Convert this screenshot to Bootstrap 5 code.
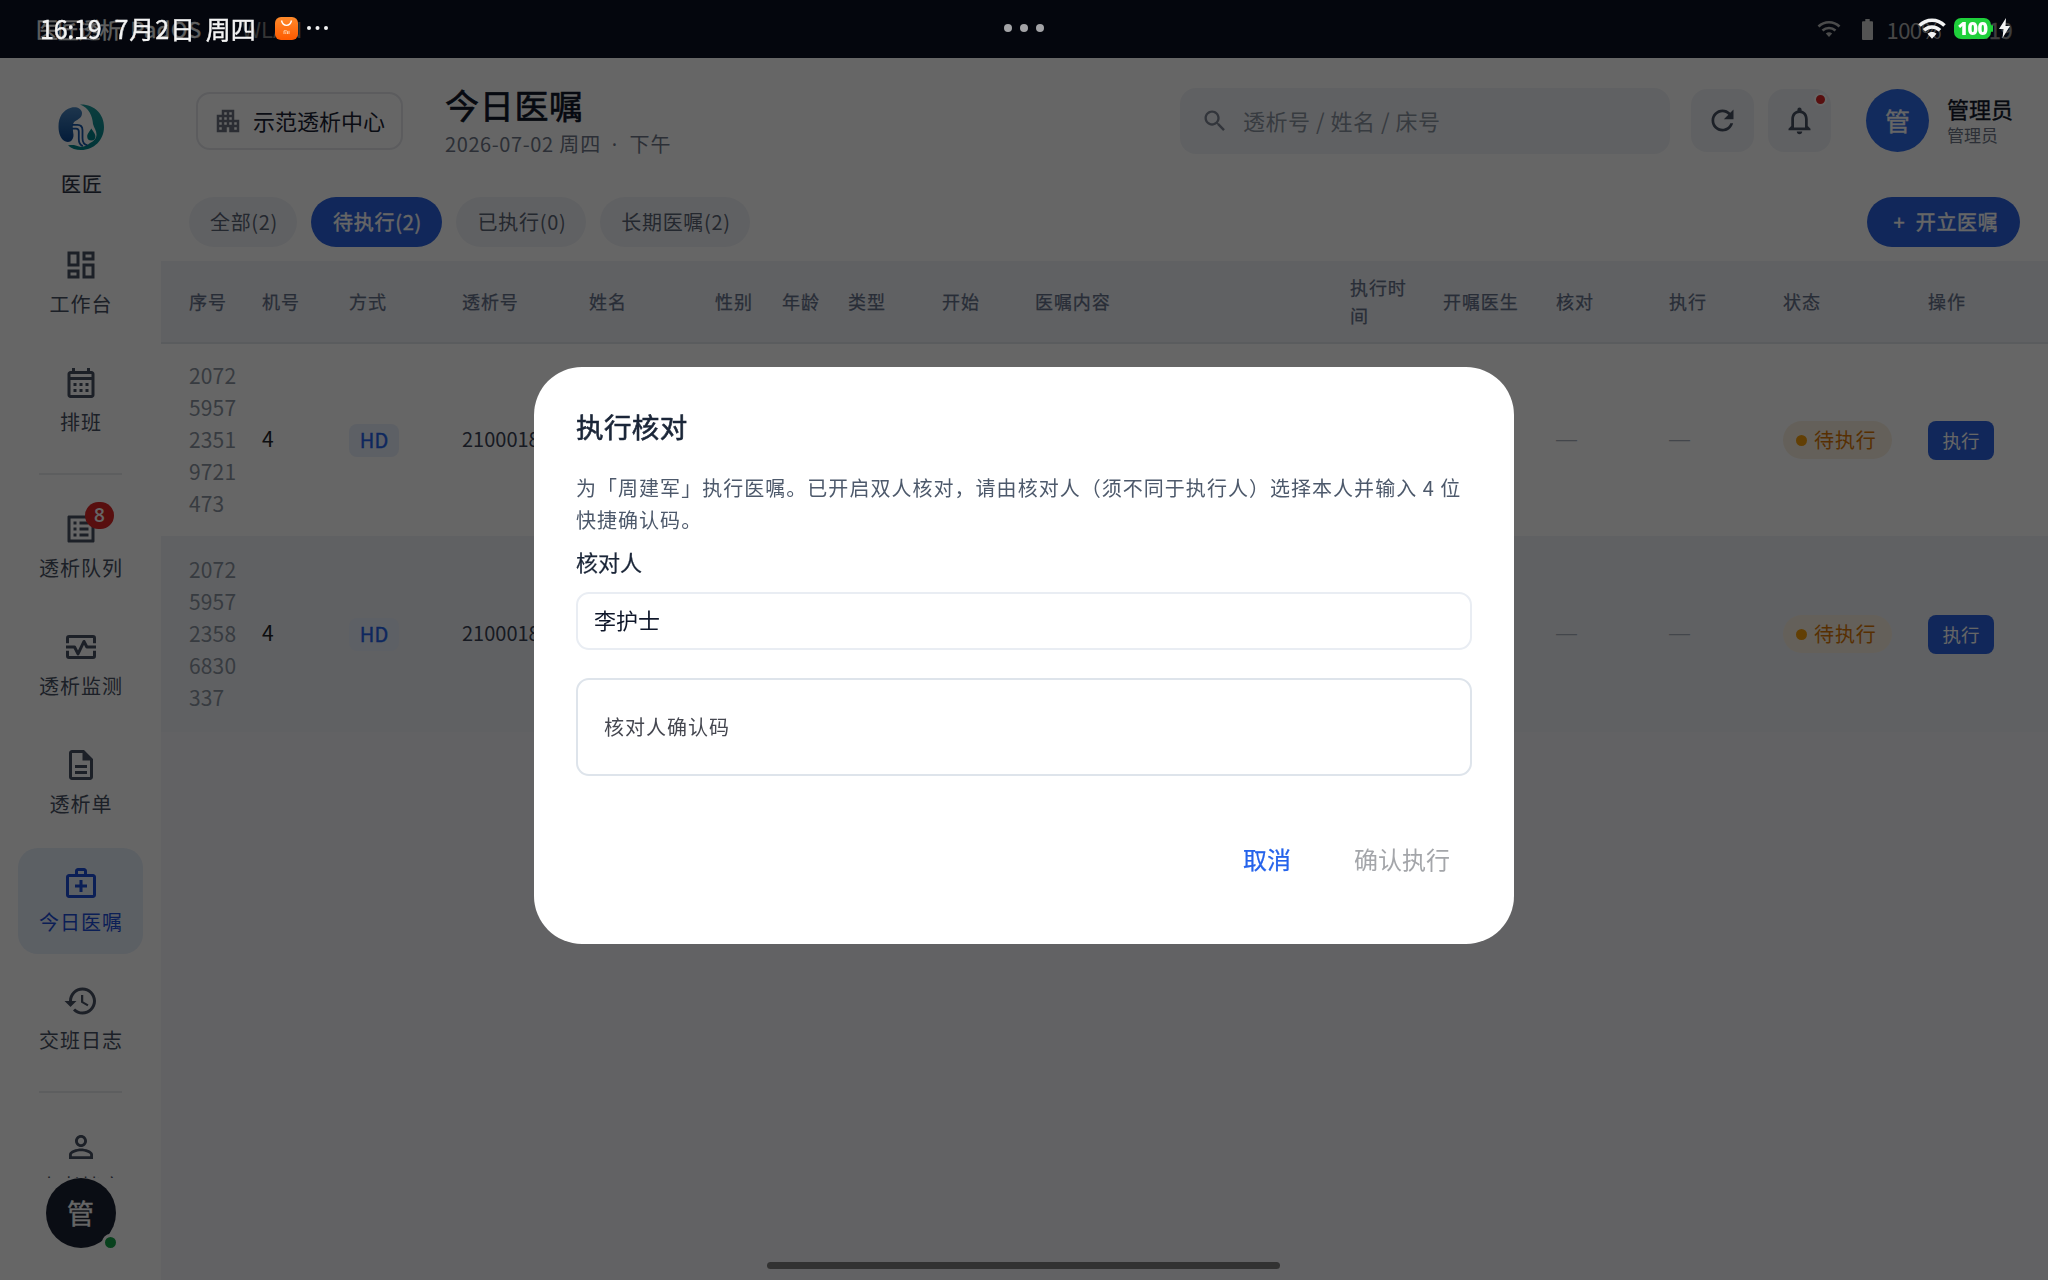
<!DOCTYPE html>
<html lang="zh-CN">
<head>
<meta charset="utf-8">
<meta name="viewport" content="width=device-width, initial-scale=1">
<title>今日医嘱</title>
<link href="https://cdn.jsdelivr.net/npm/bootstrap@5.3.0/dist/css/bootstrap.min.css" rel="stylesheet">
<style>
  body { font-family: "Noto Sans CJK SC", "Noto Sans", sans-serif; width: 2048px; height: 1280px; overflow: hidden; background: #fff; color: #0f172a; font-size: 20px; line-height: 1.3; }
  svg { display: block; flex: none; }
  .med { -webkit-text-stroke: .4px currentColor; }
  .trk { letter-spacing: 1px; }
  .appbar { height: 58px; background: #0a1122; color: #f1f1f1; font-size: 22px; padding: 0 36px; flex: none; }
  .appbar span { line-height: 56px; }
  .rail { width: 161px; flex: none; padding-top: 46px; color: #475063; }
  .rail-scroll { height: 949px; overflow: hidden; width: 125px; margin-top: 32px; padding-top: 1px; flex: none; }
  .rail-item { height: 106px; width: 125px; padding-top: 17px; border-radius: 20px; flex: none; letter-spacing: 1px; text-indent: 1px; line-height: 26px; position: relative; margin-bottom: 12px; }
  .rail-item svg { margin-bottom: 8px; }
  .rail-item.on { background: #e6effb; color: #1d4ed8; }
  .rail-item.last-in { margin-bottom: 0; }
  .rail-sep { width: 83px; height: 2px; background: #e9eaee; margin: 19px 0; flex: none; }
  .cnt { position: absolute; left: 67px; top: 8px; width: 29px; height: 27px; border-radius: 14px; background: #dc2626; color: #fff; font: 600 19px/27px "Open Sans", "Noto Sans", sans-serif; text-align: center; text-indent: 0; letter-spacing: 0; }
  .me { width: 70px; height: 70px; background: #1b2233; color: #fff; font-size: 27px; position: relative; flex: none; }
  .live { position: absolute; width: 17px; height: 17px; right: -3px; bottom: -3px; border: 3px solid #fff; background: #16a34a; border-radius: 50%; }
  .topline { height: 127px; padding: 0 28px 2px 35px; flex: none; }
  .org { width: 207px; height: 58px; border: 2px solid #e5e7ec; border-radius: 14px; padding-left: 15px; gap: 10px; font-size: 22px; color: #1a2233; }
  .find { width: 490px; height: 66px; border-radius: 16px; background: #f1f3f7; padding-left: 21px; gap: 14px; color: #8b93a1; font-size: 22px; letter-spacing: .5px; }
  .sq { width: 63px; height: 63px; border-radius: 16px; background: #f1f3f7; color: #475063; position: relative; }
  .reddot { position: absolute; right: 4px; top: 4px; width: 13px; height: 13px; border: 2.500px solid #fff; background: #dc2626; border-radius: 50%; }
  .face { width: 63px; height: 63px; background: #2f6be8; color: #fff; font-size: 25px; }
  .tabs-line { height: 76px; padding: 12px 28px 14px 28px; gap: 14px; flex: none; }
  .chip { height: 50px; border-radius: 25px; background: #f1f3f7; color: #5b6475; letter-spacing: .7px; line-height: 50px; text-align: center; padding: 0 0 0 2px; font-size: 20px; }
  .chip.on, .chip.add { background: #2b63e0; color: #fff; }
  .main { background: #f6f6f9; flex: 1; }
  .orders { table-layout: fixed; width: 1887px; margin: 0; --bs-table-bg: transparent; }
  .orders th, .orders td { border: 0; padding: 0 0 2px; vertical-align: middle; }
  .orders th:first-child, .orders td:first-child { padding: 0 18px 3px 28px; }
  .orders th { height: 82px; background: #f1f3f7; border-bottom: 2px solid #e2e6ec; color: #64708a; font-size: 18px; letter-spacing: .9px; line-height: 28px; font-weight: 400; -webkit-text-stroke: .25px currentColor; }
  .orders th, .orders th:first-child { padding-bottom: 2px; }
  .orders th.wrapped { padding-right: 22px; }
  .orders td { height: 196px; font-size: 21px; background: #fff; box-shadow: none; }
  .orders tr:nth-child(1) td { height: 193px; }
  .orders tr.alt td { background: #f1f3f7; }
  .orders td:nth-child(15), .orders td:nth-child(16), .orders td:nth-child(3) { padding-bottom: 0; }
  .serial { color: #8b93a1 !important; line-height: 32px; word-break: break-all; letter-spacing: .15px; }
  .mode { display: inline-block; width: 50px; height: 33px; line-height: 32px; border-radius: 8px; background: #e9f0fc; color: #2563eb; text-align: center; font-size: 20px; vertical-align: middle; }
  .pno { font-size: 20px !important; color: #3a4355 !important; }
  .orders .nil { color: #a9b0bb; font-family: "Liberation Sans", sans-serif; }
  .state { display: inline-flex; align-items: center; width: 109px; height: 38px; border-radius: 19px; background: #fbf1e1; color: #d97706; font-size: 20px; letter-spacing: .9px; padding-left: 13px; gap: 7px; vertical-align: middle; }
  .state i { width: 11px; height: 11px; border-radius: 50%; background: #f59e0b; }
  .go { width: 66px; height: 39px; line-height: 37px; padding: 0; border: 0; border-radius: 8px; background: #2b63e0; color: #fff; font-size: 18.500px; vertical-align: middle; }
  .scrim { opacity: .6 !important; width: 2048px; height: 1280px; }
  .sheet { max-width: 980px; width: 980px; margin: 367px 0 0 534px; }
  .sheet .modal-content { height: 577px; border: 0; border-radius: 48px; padding: 0 42px; }
  .sheet h5 { font-size: 27.500px; line-height: 40px; margin: 39px 0 0 0; color: #1b2638; font-weight: 400; -webkit-text-stroke: .6px currentColor; letter-spacing: .4px; }
  .sheet p { font-size: 20px; letter-spacing: 1.030px; line-height: 32px; margin: 26px 0 0 0; color: #4d596b; }
  .sheet label { font-size: 22px; line-height: 30px; margin: 10px 0 0 0; color: #1b2638; }
  .pick { height: 58px; border: 2px solid #e9edf3; border-radius: 13px; margin-top: 16px; padding-left: 16px; font-size: 22px; line-height: 51px; }
  .code { height: 98px; border: 2px solid #dee4eb; border-radius: 13px; margin-top: 28px; padding-left: 26px; letter-spacing: 1px; line-height: 94px; color: #454750; }
  .acts { margin-top: 59px; padding-right: 22px; gap: 63px; font-size: 24px; line-height: 48px; }
  .acts .no { color: #2563eb; -webkit-text-stroke-width: .25px; } .acts .yes { color: #a4a6aa; }
  .sys { position: fixed; top: 0; left: 0; width: 2048px; height: 56px; z-index: 2000; color: #f3f3f3; padding: 0 38px 0 40px; font-size: 25px; line-height: 52px; }
  .mi { width: 23px; height: 23px; }
  .sysdots { position: absolute; left: 1004px; top: 24px; gap: 8px; }
  .sysdots i { width: 8px; height: 8px; border-radius: 50%; background: #a3a3a6; }
  .pill100 { width: 37px; height: 21px; border-radius: 7px; background: #1fd03b; color: #fff; font: 800 18px/21px "Open Sans", sans-serif; text-align: center; letter-spacing: -.6px; }
  .homebar { position: fixed; left: 767px; top: 1262px; width: 513px; height: 7px; border-radius: 4px; background: #323232; z-index: 2000; }
</style>
</head>
<body>
<div class="d-flex flex-column h-100">
  <header class="appbar d-flex justify-content-between">
    <div class="d-flex"><span class="med" style="letter-spacing:-.9px">医匠透析</span><span class="med" style="margin-left:10px;letter-spacing:.6px">PadOS</span><span style="margin-left:40px;color:#858585">WLAN</span></div>
    <div class="d-flex align-items-center">
      <svg width="24" height="18" viewBox="0 0 24 18" fill="none" stroke="#bcbcbc" stroke-width="2.6" style="margin-right:21px"><path d="M1.500 6.500C7.500 .8 16.500 .8 22.500 6.500"/><path d="M5.500 10.500c3.800-3.400 9.200-3.400 13 0"/><path d="M8.800 13.400L12 17l3.200-3.600c-2-1.500-4.400-1.500-6.400 0z" fill="#bcbcbc" stroke="none"/></svg>
      <svg width="11" height="21" viewBox="0 0 11 21" fill="#d0d0d0" style="margin-right:14px"><path d="M3.300 0h4.400v2.300H10q1 0 1 1V20q0 1-1 1H1q-1 0-1-1V3.300q0-1 1-1h2.300z"/></svg>
      <span style="color:#b0b0b0;letter-spacing:-.6px;margin-right:19px">100%</span><span class="med" style="color:#9c9c9c;letter-spacing:-.6px">16:19</span>
    </div>
  </header>

  <div class="d-flex flex-grow-1">
    <nav class="rail d-flex flex-column align-items-center">
      <svg width="46" height="46" viewBox="0 0 46 46">
        <defs><linearGradient id="kid" x1="0" y1="0" x2="0" y2="1"><stop offset="0" stop-color="#4a86c0"/><stop offset="1" stop-color="#0a4690"/></linearGradient>
        <linearGradient id="rim" x1="0" y1="0" x2="0" y2="1"><stop offset="0" stop-color="#1f9a9c"/><stop offset="1" stop-color="#00838a"/></linearGradient></defs>
        <path d="M22 .6C36 0 46 10 46 23S36 46 23 46c-5 0-9.500-1.600-13-4.600 4-.8 8-.4 11 1.200 4 1 8-1 11-3.600 4-2 6.500-4.500 6.500-8.500 0-4-2.500-6.500-3.500-10.500C34.500 12 31 4 22 .6z" fill="url(#rim)"/>
        <path d="M13 3.800c5-1.500 10.500.5 11 5 .3 4.500-3.500 6.500-7 8.500-3.500 2.500-2 8-1.500 13.500 0 6-4 8.500-8.500 6.500C2.500 35 .5 29 .5 22.500.5 13 5 6 13 3.800z" fill="url(#kid)"/>
        <path d="M14 20.800h5.500q5 0 5 5.500v8q0 6 5 7" fill="none" stroke="#1656a8" stroke-width="1.800"/>
        <path d="M14 24.600h4q2.800 0 2.800 3v7.500q0 5.500 4 7" fill="none" stroke="#1656a8" stroke-width="1.800"/>
        <path d="M33.300 24.500c2.600 4 4.100 5.500 4.100 8a4.100 4.100 0 0 1-8.200 0c0-2.500 1.600-4 4.100-8z" fill="#00838a"/>
      </svg>
      <div class="trk med" style="margin-top:21px;line-height:26px;text-indent:3px;color:#2c3444;-webkit-text-stroke-width:.2px">医匠</div>
      <div class="rail-scroll d-flex flex-column align-items-center">
        <div class="rail-item d-flex flex-column align-items-center">
          <svg width="36" height="36" viewBox="0 0 24 24" fill="currentColor"><path d="M19 5v2h-4V5h4M9 5v6H5V5h4m10 8v6h-4v-6h4M9 17v2H5v-2h4M21 3h-8v6h8V3zM11 3H3v10h8V3zm10 8h-8v10h8V11zm-10 4H3v6h8v-6z"/></svg>工作台</div>
        <div class="rail-item last-in d-flex flex-column align-items-center">
          <svg width="36" height="36" viewBox="0 0 24 24" fill="currentColor"><path d="M19 4h-1V2h-2v2H8V2H6v2H5c-1.110 0-1.990.9-1.990 2L3 20c0 1.100.89 2 2 2h14c1.100 0 2-.9 2-2V6c0-1.100-.9-2-2-2zm0 16H5V10h14v10zm0-12H5V6h14v2zM9 14H7v-2h2v2zm4 0h-2v-2h2v2zm4 0h-2v-2h2v2zm-8 4H7v-2h2v2zm4 0h-2v-2h2v2zm4 0h-2v-2h2v2z"/></svg>排班</div>
        <div class="rail-sep"></div>
        <div class="rail-item d-flex flex-column align-items-center">
          <svg width="36" height="36" viewBox="0 0 24 24" fill="currentColor"><path d="M11 7h6v2h-6zm0 4h6v2h-6zm0 4h6v2h-6zM7 7h2v2H7zm0 4h2v2H7zm0 4h2v2H7zM20.100 3H3.900c-.5 0-.9.4-.9.9v16.200c0 .4.4.9.9.9h16.200c.4 0 .9-.5.9-.9V3.900c0-.5-.5-.9-.9-.9zM19 19H5V5h14v14z"/></svg>透析队列<span class="cnt">8</span></div>
        <div class="rail-item d-flex flex-column align-items-center">
          <svg width="36" height="36" viewBox="0 0 24 24" fill="none" stroke="currentColor" stroke-width="2"><path d="M3 9.500V6q0-1 1-1h16q1 0 1 1v3.500M3 14.500V18q0 1 1 1h16q1 0 1-1v-3.500M2 12h5.700l2.300 4.600L14 8.300l1.900 3.700H22" stroke-linejoin="round"/></svg>透析监测</div>
        <div class="rail-item d-flex flex-column align-items-center">
          <svg width="36" height="36" viewBox="0 0 24 24" fill="currentColor"><path d="M8 16h8v2H8zm0-4h8v2H8zm6-10H6c-1.100 0-2 .9-2 2v16c0 1.100.89 2 1.990 2H18c1.100 0 2-.9 2-2V8l-6-6zm4 18H6V4h7v5h5v11z"/></svg>透析单</div>
        <div class="rail-item on d-flex flex-column align-items-center">
          <svg width="36" height="36" viewBox="0 0 24 24" fill="currentColor"><path d="M20 6h-4V4c0-1.100-.9-2-2-2h-4c-1.100 0-2 .9-2 2v2H4c-1.100 0-2 .9-2 2v12c0 1.100.9 2 2 2h16c1.100 0 2-.9 2-2V8c0-1.100-.9-2-2-2zM10 4h4v2h-4V4zm10 16H4V8h16v12z"/><path d="M13 10h-2v3H8v2h3v3h2v-3h3v-2h-3z"/></svg>今日医嘱</div>
        <div class="rail-item last-in d-flex flex-column align-items-center">
          <svg width="36" height="36" viewBox="0 0 24 24" fill="currentColor"><path d="M13 3c-4.970 0-9 4.030-9 9H1l3.890 3.890.07.14L9 12H6c0-3.870 3.130-7 7-7s7 3.130 7 7-3.130 7-7 7c-1.930 0-3.680-.79-4.940-2.060l-1.420 1.420C8.270 19.990 10.510 21 13 21c4.970 0 9-4.030 9-9s-4.030-9-9-9zm-1 5v5l4.280 2.540.72-1.210-3.500-2.080V8H12z"/></svg>交班日志</div>
        <div class="rail-sep"></div>
        <div class="rail-item d-flex flex-column align-items-center">
          <svg width="36" height="36" viewBox="0 0 24 24" fill="currentColor"><path d="M12 5.900c1.160 0 2.100.94 2.100 2.100s-.94 2.100-2.100 2.100S9.900 9.160 9.900 8s.94-2.100 2.100-2.100m0 9c2.970 0 6.100 1.460 6.100 2.100v1.100H5.900V17c0-.64 3.130-2.100 6.100-2.100M12 4C9.790 4 8 5.790 8 8s1.790 4 4 4 4-1.790 4-4-1.790-4-4-4zm0 9c-2.670 0-8 1.340-8 4v3h16v-3c0-2.660-5.330-4-8-4z"/></svg>患者档案</div>
      </div>
      <div class="me med rounded-circle d-flex align-items-center justify-content-center">管<span class="live"></span></div>
    </nav>

    <div class="d-flex flex-column flex-grow-1">
      <div class="topline d-flex align-items-center">
        <div class="org d-flex align-items-center">
          <svg width="30" height="30" viewBox="0 0 24 24" fill="#6b7280"><path d="M17 11V3H7v4H3v14h8v-4h2v4h8V11h-4zM7 19H5v-2h2v2zm0-4H5v-2h2v2zm0-4H5V9h2v2zm4 4H9v-2h2v2zm0-4H9V9h2v2zm0-4H9V5h2v2zm4 8h-2v-2h2v2zm0-4h-2V9h2v2zm0-4h-2V5h2v2zm4 12h-2v-2h2v2zm0-4h-2v-2h2v2z"/></svg>
          <span>示范透析中心</span>
        </div>
        <div style="margin-left:42px;padding-top:2px">
          <div class="med" style="font-size:34px;letter-spacing:.7px;line-height:42px;-webkit-text-stroke-width:.7px">今日医嘱</div>
          <div class="trk" style="line-height:30px;margin-top:3px;color:#6e7687"><span style="letter-spacing:.6px">2026-07-02</span> 周四 <span style="font-family:'Noto Sans',sans-serif;margin:0 6px 0 5px">·</span> 下午</div>
        </div>
        <div class="find d-flex align-items-center ms-auto">
          <svg width="28" height="28" viewBox="0 0 24 24" fill="#7d8594"><path d="M15.500 14h-.79l-.28-.27C15.410 12.590 16 11.110 16 9.500 16 5.910 13.090 3 9.500 3S3 5.910 3 9.500 5.910 16 9.500 16c1.610 0 3.090-.59 4.230-1.570l.27.28v.79l5 4.990L20.490 19l-4.990-5zm-6 0C7.010 14 5 11.990 5 9.500S7.010 5 9.500 5 14 7.010 14 9.500 11.990 14 9.500 14z"/></svg>
          <span>透析号 / 姓名 / 床号</span>
        </div>
        <div class="sq d-flex align-items-center justify-content-center" style="margin-left:21px"><svg width="33" height="33" viewBox="0 0 24 24" fill="currentColor"><path d="M17.650 6.350C16.200 4.900 14.210 4 12 4c-4.420 0-7.990 3.580-7.990 8s3.570 8 7.990 8c3.730 0 6.840-2.550 7.730-6h-2.080c-.82 2.330-3.040 4-5.650 4-3.310 0-6-2.690-6-6s2.690-6 6-6c1.660 0 3.140.69 4.220 1.780L13 11h7V4l-2.350 2.350z"/></svg></div>
        <div class="sq d-flex align-items-center justify-content-center" style="margin-left:14px"><svg width="33" height="33" viewBox="0 0 24 24" fill="currentColor"><path d="M12 22c1.100 0 2-.9 2-2h-4c0 1.100.9 2 2 2zm6-6v-5c0-3.070-1.630-5.640-4.500-6.320V4c0-.83-.67-1.500-1.500-1.500s-1.500.67-1.500 1.500v.68C7.640 5.360 6 7.920 6 11v5l-2 2v1h16v-1l-2-2zm-2 1H8v-6c0-2.480 1.510-4.500 4-4.500s4 2.020 4 4.500v6z"/></svg><span class="reddot"></span></div>
        <div class="face med rounded-circle d-flex align-items-center justify-content-center" style="margin-left:35px">管</div>
        <div style="margin-left:18px;width:73px"><div class="med" style="font-size:22px;line-height:27px">管理员</div><div style="font-size:17px;line-height:25px;color:#6e7687">管理员</div></div>
      </div>

      <div class="tabs-line d-flex">
        <div class="chip" style="width:108px">全部(2)</div>
        <div class="chip on med" style="width:131px">待执行(2)</div>
        <div class="chip" style="width:130px">已执行(0)</div>
        <div class="chip" style="width:150px">长期医嘱(2)</div>
        <div class="chip add med ms-auto" style="width:153px;padding-left:5px">+&nbsp; 开立医嘱</div>
      </div>

      <div class="main">
        <table class="table orders">
          <colgroup><col style="width:101px"><col style="width:87px"><col style="width:113px"><col style="width:127px"><col style="width:126px"><col style="width:67px"><col style="width:66px"><col style="width:94px"><col style="width:93px"><col style="width:315px"><col style="width:93px"><col style="width:113px"><col style="width:113px"><col style="width:114px"><col style="width:145px"><col style="width:120px"></colgroup>
          <thead><tr><th>序号</th><th>机号</th><th>方式</th><th>透析号</th><th>姓名</th><th>性别</th><th>年龄</th><th>类型</th><th>开始</th><th>医嘱内容</th><th class="wrapped">执行时间</th><th>开嘱医生</th><th>核对</th><th>执行</th><th>状态</th><th>操作</th></tr></thead>
          <tbody>
            <tr><td class="serial">2072595723519721473</td><td>4</td><td><span class="mode med">HD</span></td><td class="pno">2100018</td><td></td><td></td><td></td><td></td><td></td><td></td><td></td><td></td><td class="nil">—</td><td class="nil">—</td><td><span class="state"><i></i>待执行</span></td><td><button class="btn go">执行</button></td></tr>
            <tr class="alt"><td class="serial">2072595723586830337</td><td>4</td><td><span class="mode med">HD</span></td><td class="pno">2100018</td><td></td><td></td><td></td><td></td><td></td><td></td><td></td><td></td><td class="nil">—</td><td class="nil">—</td><td><span class="state"><i></i>待执行</span></td><td><button class="btn go">执行</button></td></tr>
          </tbody>
        </table>
      </div>
    </div>
  </div>
</div>

<div class="modal-backdrop scrim"></div>
<div class="modal d-block overflow-hidden">
  <div class="modal-dialog sheet">
    <div class="modal-content">
      <h5>执行核对</h5>
      <p>为「周建军」执行医嘱。已开启双人核对，请由核对人（须不同于执行人）选择本人并输入 4 位快捷确认码。</p>
      <label class="med" style="-webkit-text-stroke-width:.25px">核对人</label>
      <div class="pick">李护士</div>
      <div class="code">核对人确认码</div>
      <div class="acts d-flex justify-content-end"><span class="no med">取消</span><span class="yes">确认执行</span></div>
    </div>
  </div>
</div>

<div class="sys d-flex align-items-center justify-content-between">
  <div class="d-flex align-items-center med">
    <span style="letter-spacing:-.2px">16:19</span><span style="margin-left:13px;letter-spacing:.9px">7月2日</span><span style="margin-left:10px">周四</span>
    <svg class="mi" viewBox="0 0 23 23" style="margin-left:19px"><defs><linearGradient id="bag" x1="0" y1="0" x2="0" y2="1"><stop offset="0" stop-color="#ff8a2b"/><stop offset="1" stop-color="#ff5a00"/></linearGradient></defs><rect width="23" height="23" rx="6" fill="url(#bag)"/><path d="M6.500 3.500c1.500 6.500 8.500 6.500 10 0" fill="none" stroke="#fff" stroke-width="1.400"/><path d="M9 17v-3.200h2.500q1 0 1 1V17M10.800 15.200V17M14 13.800V17" fill="none" stroke="#ffd9b8" stroke-width=".9"/></svg>
    <svg width="21" height="4" viewBox="0 0 21 4" fill="#f3f3f3" style="margin-left:9px"><circle cx="2" cy="2" r="2"/><circle cx="10.500" cy="2" r="2"/><circle cx="19" cy="2" r="2"/></svg>
  </div>
  <div class="d-flex align-items-center">
    <svg width="28" height="21" viewBox="0 0 28 21" fill="none" stroke="#f3f3f3" stroke-width="3.600" style="margin-right:8px"><path d="M1.500 7.500c7-7 18-7 25 0"/><path d="M6 12.300c4.500-4.500 11.500-4.500 16 0"/><path d="M9.500 15.800L14 20.800l4.500-5c-2.700-2.300-6.300-2.300-9 0z" fill="#f3f3f3" stroke="none"/></svg>
    <span class="pill100">100</span>
    <svg width="2" height="7" viewBox="0 0 2 7" fill="#1fd03b"><rect width="2" height="7" rx="1"/></svg>
    <svg width="11" height="20" viewBox="0 0 11 20" fill="#f3f3f3" style="margin-left:6px"><path d="M7 0L0 11h4.500L3.500 20 11 8H6.500z"/></svg>
  </div>
  <div class="sysdots d-flex"><i></i><i></i><i></i></div>
</div>
<div class="homebar"></div>
<script src="https://cdn.jsdelivr.net/npm/bootstrap@5.3.0/dist/js/bootstrap.bundle.min.js"></script>
</body>
</html>
